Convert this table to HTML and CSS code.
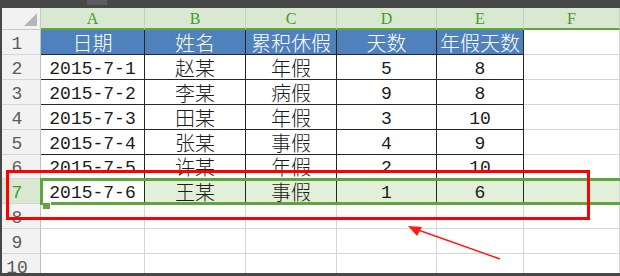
FILE: index.html
```html
<!DOCTYPE html>
<html lang="zh">
<head>
<meta charset="utf-8">
<title>Sheet</title>
<link rel="stylesheet" href="styles.css">
</head>
<body>
<div class="topbar"><span class="tab"></span></div>
<div class="main">
  <div class="leftbar"></div>
  <div class="grid">
    <div class="corner"><span class="tri"></span></div>
    <div class="ch">A</div><div class="ch">B</div><div class="ch">C</div><div class="ch">D</div><div class="ch">E</div><div class="ch">F</div>

    <div class="rh">1</div>
    <div class="c t th zh">日期</div><div class="c t th zh">姓名</div><div class="c t th zh">累积休假</div><div class="c t th zh">天数</div><div class="c t th zh">年假天数</div><div class="c"></div>

    <div class="rh">2</div>
    <div class="c t">2015-7-1</div><div class="c t zh">赵某</div><div class="c t zh">年假</div><div class="c t">5</div><div class="c t">8</div><div class="c"></div>

    <div class="rh">3</div>
    <div class="c t">2015-7-2</div><div class="c t zh">李某</div><div class="c t zh">病假</div><div class="c t">9</div><div class="c t">8</div><div class="c"></div>

    <div class="rh">4</div>
    <div class="c t">2015-7-3</div><div class="c t zh">田某</div><div class="c t zh">年假</div><div class="c t">3</div><div class="c t">10</div><div class="c"></div>

    <div class="rh">5</div>
    <div class="c t">2015-7-4</div><div class="c t zh">张某</div><div class="c t zh">事假</div><div class="c t">4</div><div class="c t">9</div><div class="c"></div>

    <div class="rh">6</div>
    <div class="c t">2015-7-5</div><div class="c t zh">许某</div><div class="c t zh">年假</div><div class="c t">2</div><div class="c t">10</div><div class="c"></div>

    <div class="rh rh-sel">7</div>
    <div class="c t">2015-7-6</div><div class="c t s zh">王某</div><div class="c t s zh">事假</div><div class="c t s">1</div><div class="c t s">6</div><div class="c s"></div>

    <div class="rh">8</div>
    <div class="c"></div><div class="c"></div><div class="c"></div><div class="c"></div><div class="c"></div><div class="c"></div>

    <div class="rh">9</div>
    <div class="c"></div><div class="c"></div><div class="c"></div><div class="c"></div><div class="c"></div><div class="c"></div>

    <div class="rh">10</div>
    <div class="c"></div><div class="c"></div><div class="c"></div><div class="c"></div><div class="c"></div><div class="c"></div>
  </div>
</div>
<div class="bottombar"></div>

<div class="sel"></div>
<div class="handle"></div>
<div class="redbox"></div>
<svg class="arrow" width="620" height="276" viewBox="0 0 620 276">
  <line x1="500" y1="259" x2="414" y2="228.5" stroke="#ff1a1a" stroke-width="1.5"/>
  <polygon points="408,226 422,227 417,236" fill="#ff1a1a"/>
</svg>
</body>
</html>
```
FILE: styles.css
```css
html, body {
  margin: 0;
  padding: 0;
}
body {
  position: relative;
  width: 620px;
  height: 276px;
  overflow: hidden;
  background: #ffffff;
  font-family: "Liberation Mono", "Noto Sans CJK SC", monospace;
}
.topbar {
  height: 8px;
  background: #474747;
  position: relative;
}
.tab {
  display: block;
  margin-left: 87px;
  width: 20px;
  height: 5px;
  background: #5c5c5c;
}
.main {
  display: flex;
  height: 265px;
  overflow: hidden;
}
.leftbar {
  width: 2px;
  background: #474747;
  flex: none;
}
.grid {
  display: grid;
  grid-template-columns: 39px 104px 101px 91px 100px 87px 96px;
  grid-template-rows: 22px 25px 25px 25px 25px 25px 24px 25px 25px 25px 25px;
  flex: none;
}
.grid > div {
  box-sizing: border-box;
  line-height: 1;
}
.corner {
  background: #f2f2f2;
  border-right: 1px solid #c9c9c9;
  border-bottom: 1px solid #c9c9c9;
  position: relative;
}
.tri {
  position: absolute;
  right: 3px;
  bottom: 3px;
  width: 13px;
  height: 13px;
  background: #b6b6b6;
  clip-path: polygon(100% 0, 100% 100%, 0 100%);
}
.ch {
  background: #d9e8d0;
  border-right: 1px solid #c4d3bc;
  border-bottom: 2px solid #5fa53d;
  color: #3f9c2c;
  font-family: "Liberation Serif", serif;
  font-size: 16px;
  display: flex;
  align-items: center;
  justify-content: center;
  padding-top: 2px;
}
.rh {
  background: #f2f2f2;
  border-right: 1px solid #c0c0c0;
  border-bottom: 1px solid #d6d6d6;
  color: #5a5a5a;
  font-size: 18px;
  display: flex;
  align-items: center;
  justify-content: center;
  padding: 3px 8px 0 0;
}
.rh-sel {
  background: #d9e8d0;
  color: #3f9c2c;
}
.c {
  border-right: 1px solid #d6d6d6;
  border-bottom: 1px solid #d6d6d6;
  display: flex;
  align-items: center;
  justify-content: center;
  font-size: 18px;
  color: #1a1a1a;
  padding-top: 3px;
  white-space: nowrap;
}
.zh {
  font-family: "Noto Sans CJK SC", sans-serif;
  font-size: 20px;
  font-weight: 300;
  padding-top: 1px;
}
.t {
  border-right-color: #262626;
  border-bottom-color: #262626;
}
.th {
  background: #4f81bd;
  color: #ffffff;
}
.s {
  background: #e3f0d9;
}
.bottombar {
  height: 3px;
  background: #474747;
}
.sel {
  position: absolute;
  left: 40px;
  top: 178px;
  right: -5px;
  height: 27px;
  box-sizing: border-box;
  border: 3px solid #5fa53d;
}
.handle {
  position: absolute;
  left: 43px;
  top: 202px;
  width: 7px;
  height: 6px;
  background: #5fa53d;
  border: 1px solid #ffffff;
  border-left: none;
  border-bottom: none;
}
.redbox {
  position: absolute;
  left: 6px;
  top: 170px;
  width: 584px;
  height: 50px;
  box-sizing: border-box;
  border: 3px solid #ff0000;
}
.arrow {
  position: absolute;
  left: 0;
  top: 0;
  pointer-events: none;
}
```
